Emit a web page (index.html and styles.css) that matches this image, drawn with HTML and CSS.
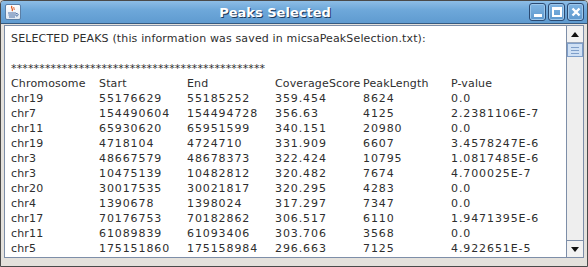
FILE: index.html
```html
<!DOCTYPE html>
<html lang="en">
<head>
  <meta charset="UTF-8">
  <title>Peaks Selected</title>
  <link rel="stylesheet" href="styles.css">
</head>
<body>
  <div class="window">
    <div class="titlebar">
      <div class="app-icon">
        <svg width="14" height="14" viewBox="0 0 14 14">
          <path d="M6 1 C4 3 8 4 6 6" stroke="#e0561b" stroke-width="1.3" fill="none"/>
          <path d="M8 2 C7 3 9 4 8 5" stroke="#e0561b" stroke-width="1" fill="none"/>
          <path d="M2 8 H10 M2.5 10 H10.5 M3 12 H9" stroke="#4b6fa6" stroke-width="1.2"/>
          <path d="M10 8.5 C13 8.5 13 11 10 11" stroke="#4b6fa6" stroke-width="1" fill="none"/>
        </svg>
      </div>
      <div class="title">Peaks Selected</div>
      <div class="win-buttons">
        <div class="win-btn"><span class="min-mark"></span></div>
        <div class="win-btn"><span class="max-mark"></span></div>
        <div class="win-btn">
          <svg width="10" height="10" viewBox="0 0 10 10">
            <path d="M1.5 1.5 L8.5 8.5 M8.5 1.5 L1.5 8.5" stroke="#fff" stroke-width="2.4"/>
          </svg>
        </div>
      </div>
    </div>

    <div class="frame">
      <div class="scroll-pane">
        <div class="text">
          <div class="line">SELECTED PEAKS (this information was saved in micsaPeakSelection.txt):</div>
          <div class="line">&nbsp;</div>
          <div class="line">*********************************************</div>
          <div class="row"><span>Chromosome</span><span>Start</span><span>End</span><span>CoverageScore</span><span>PeakLength</span><span>P-value</span></div>
          <div class="row data"><span>chr19</span><span>55176629</span><span>55185252</span><span>359.454</span><span>8624</span><span>0.0</span></div>
          <div class="row data"><span>chr7</span><span>154490604</span><span>154494728</span><span>356.63</span><span>4125</span><span>2.2381106E-7</span></div>
          <div class="row data"><span>chr11</span><span>65930620</span><span>65951599</span><span>340.151</span><span>20980</span><span>0.0</span></div>
          <div class="row data"><span>chr19</span><span>4718104</span><span>4724710</span><span>331.909</span><span>6607</span><span>3.4578247E-6</span></div>
          <div class="row data"><span>chr3</span><span>48667579</span><span>48678373</span><span>322.424</span><span>10795</span><span>1.0817485E-6</span></div>
          <div class="row data"><span>chr3</span><span>10475139</span><span>10482812</span><span>320.482</span><span>7674</span><span>4.700025E-7</span></div>
          <div class="row data"><span>chr20</span><span>30017535</span><span>30021817</span><span>320.295</span><span>4283</span><span>0.0</span></div>
          <div class="row data"><span>chr4</span><span>1390678</span><span>1398024</span><span>317.297</span><span>7347</span><span>0.0</span></div>
          <div class="row data"><span>chr17</span><span>70176753</span><span>70182862</span><span>306.517</span><span>6110</span><span>1.9471395E-6</span></div>
          <div class="row data"><span>chr11</span><span>61089839</span><span>61093406</span><span>303.706</span><span>3568</span><span>0.0</span></div>
          <div class="row data"><span>chr5</span><span>175151860</span><span>175158984</span><span>296.663</span><span>7125</span><span>4.922651E-5</span></div>
          <div class="row data"><span>chr12</span><span>11541607</span><span>11547217</span><span>293.387</span><span>5631</span><span>0.0</span></div>
        </div>
        <div class="scrollbar">
          <div class="sb-btn"><span class="arrow-up"></span></div>
          <div class="sb-thumb"><i></i><i></i><i></i></div>
          <div class="sb-track"></div>
          <div class="sb-btn"><span class="arrow-down"></span></div>
        </div>
      </div>
    </div>
  </div>
</body>
</html>
```

FILE: styles.css
```css
body { margin: 0; background: #d8d5cf; font-family: "DejaVu Sans", sans-serif; }

.window {
  width: 588px; height: 267px; box-sizing: border-box;
  display: flex; flex-direction: column;
  border: 1px solid #4a4a4a; border-radius: 4px 4px 0 0;
  background: #e4e1dc; overflow: hidden;
}

.titlebar {
  height: 22px; flex: none; display: flex; align-items: center;
  background: linear-gradient(#8dbde6, #6ea8da 40%, #5f9bd0);
  border-bottom: 1px solid #35597f;
  padding: 0 3px 0 4px;
}
.app-icon {
  width: 16px; height: 16px; box-sizing: border-box;
  border: 1px solid #5b7fa6; border-radius: 2px;
  background: linear-gradient(#ffffff, #dfe8f2);
  display: flex; align-items: center; justify-content: center;
}
.title {
  flex: 1; text-align: center; color: #fff;
  font-weight: bold; font-size: 13px;
  text-shadow: 1px 1px 0 #1f3a5a;
}
.win-buttons { display: flex; gap: 2px; }
.win-btn {
  width: 17px; height: 18px; box-sizing: border-box;
  border: 1px solid #2b4a72; border-radius: 3px;
  background: linear-gradient(#7fb4e2, #5e98cd);
  box-shadow: inset 0 0 0 1px #9cc6ea;
  display: flex; align-items: center; justify-content: center;
}
.min-mark { width: 8px; height: 3px; background: #fff; margin-top: 7px; }
.max-mark { width: 6px; height: 5px; border: 2px solid #fff; border-top-width: 3px; }

.frame { flex: 1; padding: 1px 3px 8px 3px; display: flex; min-height: 0; }
.scroll-pane {
  flex: 1; display: flex; min-height: 0;
  border: 1px solid #7d8ea8; background: #fff;
}
.text {
  flex: 1; overflow: hidden; padding: 5px 0 0 6px;
  font-size: 11px; line-height: 15px; color: #2e2e2e;
  letter-spacing: 0.15px; white-space: nowrap;
}
.row { display: grid; grid-template-columns: repeat(5, 88px) auto; }
.row.data span + span { letter-spacing: 0.9px; }

.scrollbar {
  width: 16px; flex: none; display: flex; flex-direction: column;
  border-left: 1px solid #7d8ea8; background: #eeeeee;
}
.sb-btn {
  height: 16px; flex: none; background: #f2f2f2;
  display: flex; align-items: center; justify-content: center;
}
.sb-btn:first-child { border-bottom: 1px solid #9aa8bd; }
.sb-btn:last-child { border-top: 1px solid #7d8ea8; }
.arrow-up { border: 4px solid transparent; border-top: 0; border-bottom: 5px solid #111; }
.arrow-down { border: 4px solid transparent; border-bottom: 0; border-top: 5px solid #111; }
.sb-thumb {
  height: 14px; flex: none; box-sizing: border-box;
  border: 1px solid #7f9fca; background: #cfe0f4;
  display: flex; flex-direction: column; justify-content: center; gap: 2px;
  padding: 0 3px;
}
.sb-thumb i { display: block; height: 1px; background: #7f9fca; }
.sb-track { flex: 1; }
```
